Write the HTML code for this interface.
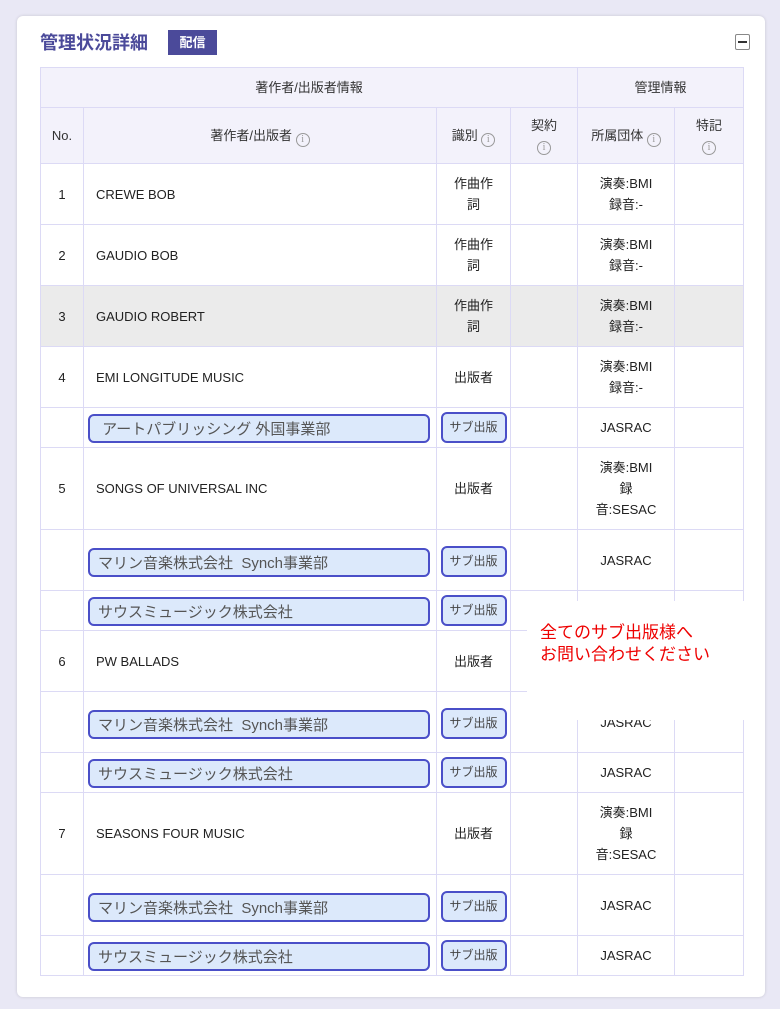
<!DOCTYPE html>
<html><head><meta charset="utf-8"><style>
*{box-sizing:border-box;margin:0;padding:0}
body{width:780px;height:1009px;background:#e9e8f5;font-family:"Liberation Sans","Noto Sans CJK JP",sans-serif;position:relative;overflow:hidden;color:#222}
.card{position:absolute;left:17px;top:16px;width:748px;height:981px;background:#fff;border-radius:6px;box-shadow:0 0 3px rgba(0,0,0,.15)}
.title{position:absolute;left:40px;top:29px;font-size:18px;font-weight:bold;color:#4b4a9a;letter-spacing:0}
.tag{position:absolute;left:168px;top:30px;width:49px;height:25px;background:#4b4a9a;color:#fff;font-size:13px;font-weight:bold;text-align:center;line-height:25px}
.min{position:absolute;left:735px;top:34px;width:15px;height:16px;border:1px solid #888;border-radius:2px}
.min:after{content:"";position:absolute;left:2px;top:6px;width:9px;height:1.5px;background:#333}
table{position:absolute;left:40px;top:67px;border-collapse:collapse;table-layout:fixed;width:703px;font-size:13px}
td,th{border:1px solid #dcdaf5;text-align:center;vertical-align:middle;font-weight:normal;line-height:21px}
th{background:#f3f2fb;color:#333}
th.t{line-height:18px;vertical-align:top;padding-top:9px}
td.n{text-align:left;padding-left:12px}
.i{display:inline-block;width:14px;height:14px;border:1px solid #999;border-radius:50%;font-size:10px;line-height:12px;color:#999;text-align:center;vertical-align:-2px;font-family:"Liberation Serif",serif}
.g td{background:#ebebeb}
.box{display:block;margin-left:4px;width:342px;height:29px;border:2px solid #4a4fc8;border-radius:6px;background:#dce9fb;color:#555;font-size:15px;text-align:left;padding-left:8px;line-height:27px}
.bd{display:inline-block;width:66px;height:31px;border:2px solid #4a4fc8;border-radius:6px;background:#dce9fb;color:#444;font-size:12px;line-height:26px}
.sub td{vertical-align:bottom;padding-bottom:4px}
.subt td{vertical-align:bottom;padding-bottom:13px}
.sub td.j,.subt td.j{vertical-align:middle;padding-bottom:0}
.note{position:absolute;left:527px;top:601px;width:238px;height:119px;background:#fff;color:#e00;font-size:17px;line-height:22px;padding:21px 0 0 13px}
</style></head><body>
<div class="card"></div>
<div class="title">管理状況詳細</div>
<div class="tag">配信</div>
<div class="min"></div>
<table>
<colgroup><col style="width:43px"><col style="width:353px"><col style="width:74px"><col style="width:67px"><col style="width:97px"><col style="width:69px"></colgroup>
<tr style="height:40px"><th colspan="4">著作者/出版者情報</th><th colspan="2">管理情報</th></tr>
<tr style="height:56px"><th>No.</th><th>著作者/出版者 <span class="i">i</span></th><th>識別 <span class="i">i</span></th><th class="t">契約<br><span class="i">i</span></th><th>所属団体 <span class="i">i</span></th><th class="t">特記<br><span class="i">i</span></th></tr>
<tr style="height:61px"><td>1</td><td class="n">CREWE BOB</td><td>作曲作<br>詞</td><td></td><td>演奏:BMI<br>録音:-</td><td></td></tr>
<tr style="height:61px"><td>2</td><td class="n">GAUDIO BOB</td><td>作曲作<br>詞</td><td></td><td>演奏:BMI<br>録音:-</td><td></td></tr>
<tr class="g" style="height:61px"><td>3</td><td class="n">GAUDIO ROBERT</td><td>作曲作<br>詞</td><td></td><td>演奏:BMI<br>録音:-</td><td></td></tr>
<tr style="height:61px"><td>4</td><td class="n">EMI LONGITUDE MUSIC</td><td>出版者</td><td></td><td>演奏:BMI<br>録音:-</td><td></td></tr>
<tr class="sub" style="height:40px"><td></td><td><span class="box">&nbsp;アートパブリッシング 外国事業部</span></td><td><span class="bd">サブ出版</span></td><td></td><td class="j">JASRAC</td><td></td></tr>
<tr style="height:82px"><td>5</td><td class="n">SONGS OF UNIVERSAL INC</td><td>出版者</td><td></td><td>演奏:BMI<br>録<br>音:SESAC</td><td></td></tr>
<tr class="subt" style="height:61px"><td></td><td><span class="box">マリン音楽株式会社&nbsp; Synch事業部</span></td><td><span class="bd">サブ出版</span></td><td></td><td class="j">JASRAC</td><td></td></tr>
<tr class="sub" style="height:40px"><td></td><td><span class="box">サウスミュージック株式会社</span></td><td><span class="bd">サブ出版</span></td><td></td><td class="j">JASRAC</td><td></td></tr>
<tr style="height:61px"><td>6</td><td class="n">PW BALLADS</td><td>出版者</td><td></td><td>演奏:BMI<br>録音:-</td><td></td></tr>
<tr class="subt" style="height:61px"><td></td><td><span class="box">マリン音楽株式会社&nbsp; Synch事業部</span></td><td><span class="bd">サブ出版</span></td><td></td><td class="j">JASRAC</td><td></td></tr>
<tr class="sub" style="height:40px"><td></td><td><span class="box">サウスミュージック株式会社</span></td><td><span class="bd">サブ出版</span></td><td></td><td class="j">JASRAC</td><td></td></tr>
<tr style="height:82px"><td>7</td><td class="n">SEASONS FOUR MUSIC</td><td>出版者</td><td></td><td>演奏:BMI<br>録<br>音:SESAC</td><td></td></tr>
<tr class="subt" style="height:61px"><td></td><td><span class="box">マリン音楽株式会社&nbsp; Synch事業部</span></td><td><span class="bd">サブ出版</span></td><td></td><td class="j">JASRAC</td><td></td></tr>
<tr class="sub" style="height:40px"><td></td><td><span class="box">サウスミュージック株式会社</span></td><td><span class="bd">サブ出版</span></td><td></td><td class="j">JASRAC</td><td></td></tr>
</table>
<div class="note">全てのサブ出版様へ<br>お問い合わせください</div>
</body></html>
